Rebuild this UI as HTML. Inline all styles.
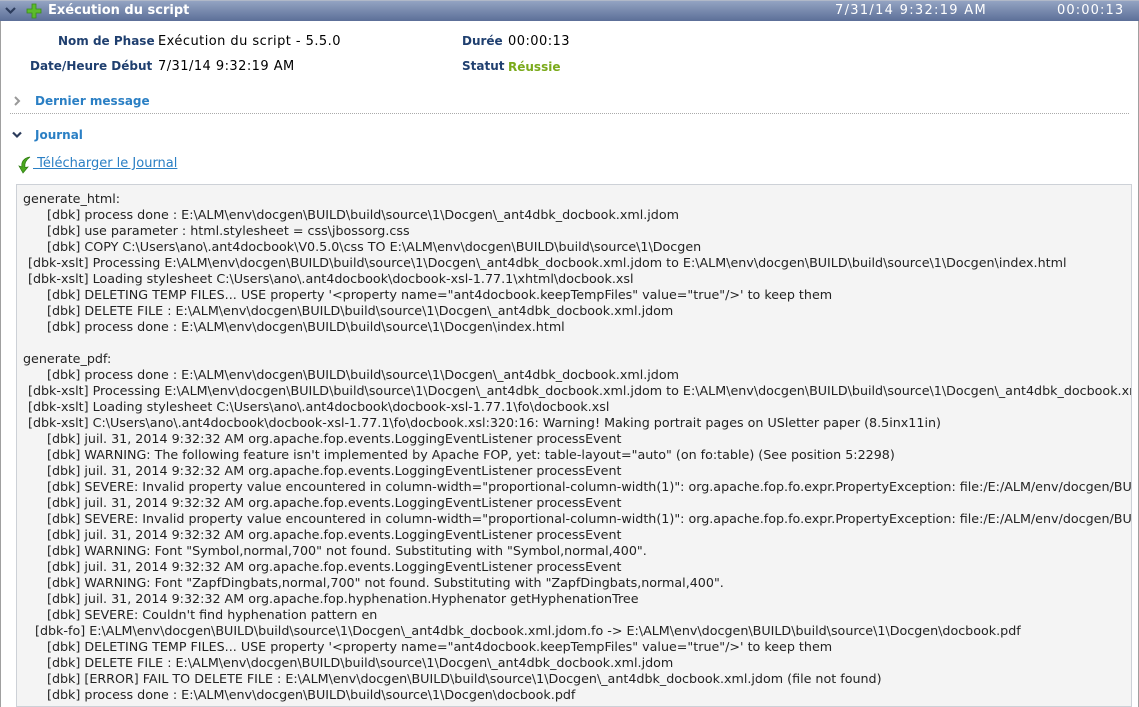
<!DOCTYPE html>
<html><head><meta charset="utf-8"><style>
html,body{margin:0;padding:0;background:#fff;}
body{width:1139px;height:707px;overflow:hidden;position:relative;font-family:"DejaVu Sans","Liberation Sans",sans-serif;}
.frame{position:absolute;left:0;top:0;height:707px;border-left:1px solid #a0a0a0;border-right:1px solid #a0a0a0;box-sizing:border-box;width:1139px;}
.hdr{position:absolute;left:0;top:0;width:1139px;height:21px;background:linear-gradient(#93a3c2,#5c6f98);border-top:1px solid #b0b8c8;box-sizing:border-box;color:#fff;font-size:12.5px;font-weight:bold;}
.hdr span{position:absolute;top:2px;}
.lbl{position:absolute;font-size:12px;font-weight:bold;color:#1f3f6f;}
.val{position:absolute;font-size:13px;letter-spacing:0.45px;color:#000;}
.sec{position:absolute;font-size:12px;font-weight:bold;color:#2a7fc4;}
.log{position:absolute;left:16px;top:184px;width:1116px;height:523px;background:#f4f4f4;border:1px solid #cdd1d7;box-sizing:border-box;overflow:hidden;font-size:12.7px;line-height:16px;color:#222;padding-top:6px;white-space:nowrap;}
.log div{height:16px;}
.a{padding-left:6px}.b{padding-left:30px}.c{padding-left:11px}.d{padding-left:18px}
</style></head><body>
<div class="frame"></div>
<div class="hdr">
<svg style="position:absolute;left:5px;top:5px" width="11" height="9" viewBox="0 0 11 9"><path d="M1 2 L5.5 6.5 L10 2" fill="none" stroke="#2c3c5c" stroke-width="2.2"/></svg>
<svg style="position:absolute;left:26px;top:2px" width="16" height="16" viewBox="0 0 16 16"><path d="M6 1h4v5h5v4h-5v5H6v-5H1V6h5z" fill="#5cbc2c" stroke="#3a8a1a" stroke-width="0.8"/></svg>
<span style="left:48px;font-size:13px">Exécution du script</span>
<span style="left:835px;font-weight:normal;font-size:13px;letter-spacing:1.3px">7/31/14 9:32:19 AM</span>
<span style="left:1057px;font-weight:normal;font-size:13px;letter-spacing:1.1px">00:00:13</span>
</div>
<div class="lbl" style="left:58px;top:34px">Nom de Phase</div>
<div class="val" style="left:158px;top:34px">Exécution du script - 5.5.0</div>
<div class="lbl" style="left:30px;top:59px">Date/Heure Début</div>
<div class="val" style="left:158px;top:59px">7/31/14 9:32:19 AM</div>
<div class="lbl" style="left:462px;top:34px">Durée</div>
<div class="val" style="left:508px;top:34px">00:00:13</div>
<div class="lbl" style="left:462px;top:59px">Statut</div>
<div class="lbl" style="left:508px;top:60px;color:#7aaa1a">Réussie</div>
<svg style="position:absolute;left:13px;top:96px" width="8" height="10" viewBox="0 0 8 10"><path d="M2 1 L6 5 L2 9" fill="none" stroke="#999" stroke-width="2"/></svg>
<div class="sec" style="left:35px;top:94px">Dernier message</div>
<div style="position:absolute;left:10px;top:113px;width:1119px;border-top:1px dotted #aaa"></div>
<svg style="position:absolute;left:12px;top:131px" width="10" height="8" viewBox="0 0 10 8"><path d="M1 1.5 L5 5.5 L9 1.5" fill="none" stroke="#2c3c5c" stroke-width="2.2"/></svg>
<div class="sec" style="left:35px;top:128px">Journal</div>
<svg style="position:absolute;left:17px;top:156px" width="16" height="18" viewBox="0 0 16 18"><path d="M13 1 C6 2 4 7 5 11 L2 10 L6 17 L11 11 L8 11.5 C7 7 9 4 13 1z" fill="#4aa81e" stroke="#2c7a10" stroke-width="0.7"/></svg>
<div style="position:absolute;left:33px;top:156px;font-size:13px;color:#2a7fc4;text-decoration:underline;white-space:pre"> Télécharger le Journal</div>
<div class="log">
<div class="a">generate_html:</div>
<div class="b">[dbk] process done : E:\ALM\env\docgen\BUILD\build\source\1\Docgen\_ant4dbk_docbook.xml.jdom</div>
<div class="b">[dbk] use parameter : html.stylesheet = css\jbossorg.css</div>
<div class="b">[dbk] COPY C:\Users\ano\.ant4docbook\V0.5.0\css TO E:\ALM\env\docgen\BUILD\build\source\1\Docgen</div>
<div class="c">[dbk-xslt] Processing E:\ALM\env\docgen\BUILD\build\source\1\Docgen\_ant4dbk_docbook.xml.jdom to E:\ALM\env\docgen\BUILD\build\source\1\Docgen\index.html</div>
<div class="c">[dbk-xslt] Loading stylesheet C:\Users\ano\.ant4docbook\docbook-xsl-1.77.1\xhtml\docbook.xsl</div>
<div class="b">[dbk] DELETING TEMP FILES... USE property '&lt;property name="ant4docbook.keepTempFiles" value="true"/&gt;' to keep them</div>
<div class="b">[dbk] DELETE FILE : E:\ALM\env\docgen\BUILD\build\source\1\Docgen\_ant4dbk_docbook.xml.jdom</div>
<div class="b">[dbk] process done : E:\ALM\env\docgen\BUILD\build\source\1\Docgen\index.html</div>
<div></div>
<div class="a">generate_pdf:</div>
<div class="b">[dbk] process done : E:\ALM\env\docgen\BUILD\build\source\1\Docgen\_ant4dbk_docbook.xml.jdom</div>
<div class="c">[dbk-xslt] Processing E:\ALM\env\docgen\BUILD\build\source\1\Docgen\_ant4dbk_docbook.xml.jdom to E:\ALM\env\docgen\BUILD\build\source\1\Docgen\_ant4dbk_docbook.xml</div>
<div class="c">[dbk-xslt] Loading stylesheet C:\Users\ano\.ant4docbook\docbook-xsl-1.77.1\fo\docbook.xsl</div>
<div class="c">[dbk-xslt] C:\Users\ano\.ant4docbook\docbook-xsl-1.77.1\fo\docbook.xsl:320:16: Warning! Making portrait pages on USletter paper (8.5inx11in)</div>
<div class="b">[dbk] juil. 31, 2014 9:32:32 AM org.apache.fop.events.LoggingEventListener processEvent</div>
<div class="b">[dbk] WARNING: The following feature isn't implemented by Apache FOP, yet: table-layout="auto" (on fo:table) (See position 5:2298)</div>
<div class="b">[dbk] juil. 31, 2014 9:32:32 AM org.apache.fop.events.LoggingEventListener processEvent</div>
<div class="b">[dbk] SEVERE: Invalid property value encountered in column-width="proportional-column-width(1)": org.apache.fop.fo.expr.PropertyException: file:/E:/ALM/env/docgen/BUILD/build</div>
<div class="b">[dbk] juil. 31, 2014 9:32:32 AM org.apache.fop.events.LoggingEventListener processEvent</div>
<div class="b">[dbk] SEVERE: Invalid property value encountered in column-width="proportional-column-width(1)": org.apache.fop.fo.expr.PropertyException: file:/E:/ALM/env/docgen/BUILD/build</div>
<div class="b">[dbk] juil. 31, 2014 9:32:32 AM org.apache.fop.events.LoggingEventListener processEvent</div>
<div class="b">[dbk] WARNING: Font "Symbol,normal,700" not found. Substituting with "Symbol,normal,400".</div>
<div class="b">[dbk] juil. 31, 2014 9:32:32 AM org.apache.fop.events.LoggingEventListener processEvent</div>
<div class="b">[dbk] WARNING: Font "ZapfDingbats,normal,700" not found. Substituting with "ZapfDingbats,normal,400".</div>
<div class="b">[dbk] juil. 31, 2014 9:32:32 AM org.apache.fop.hyphenation.Hyphenator getHyphenationTree</div>
<div class="b">[dbk] SEVERE: Couldn't find hyphenation pattern en</div>
<div class="d">[dbk-fo] E:\ALM\env\docgen\BUILD\build\source\1\Docgen\_ant4dbk_docbook.xml.jdom.fo -&gt; E:\ALM\env\docgen\BUILD\build\source\1\Docgen\docbook.pdf</div>
<div class="b">[dbk] DELETING TEMP FILES... USE property '&lt;property name="ant4docbook.keepTempFiles" value="true"/&gt;' to keep them</div>
<div class="b">[dbk] DELETE FILE : E:\ALM\env\docgen\BUILD\build\source\1\Docgen\_ant4dbk_docbook.xml.jdom</div>
<div class="b">[dbk] [ERROR] FAIL TO DELETE FILE : E:\ALM\env\docgen\BUILD\build\source\1\Docgen\_ant4dbk_docbook.xml.jdom (file not found)</div>
<div class="b">[dbk] process done : E:\ALM\env\docgen\BUILD\build\source\1\Docgen\docbook.pdf</div>
</div>
</body></html>
